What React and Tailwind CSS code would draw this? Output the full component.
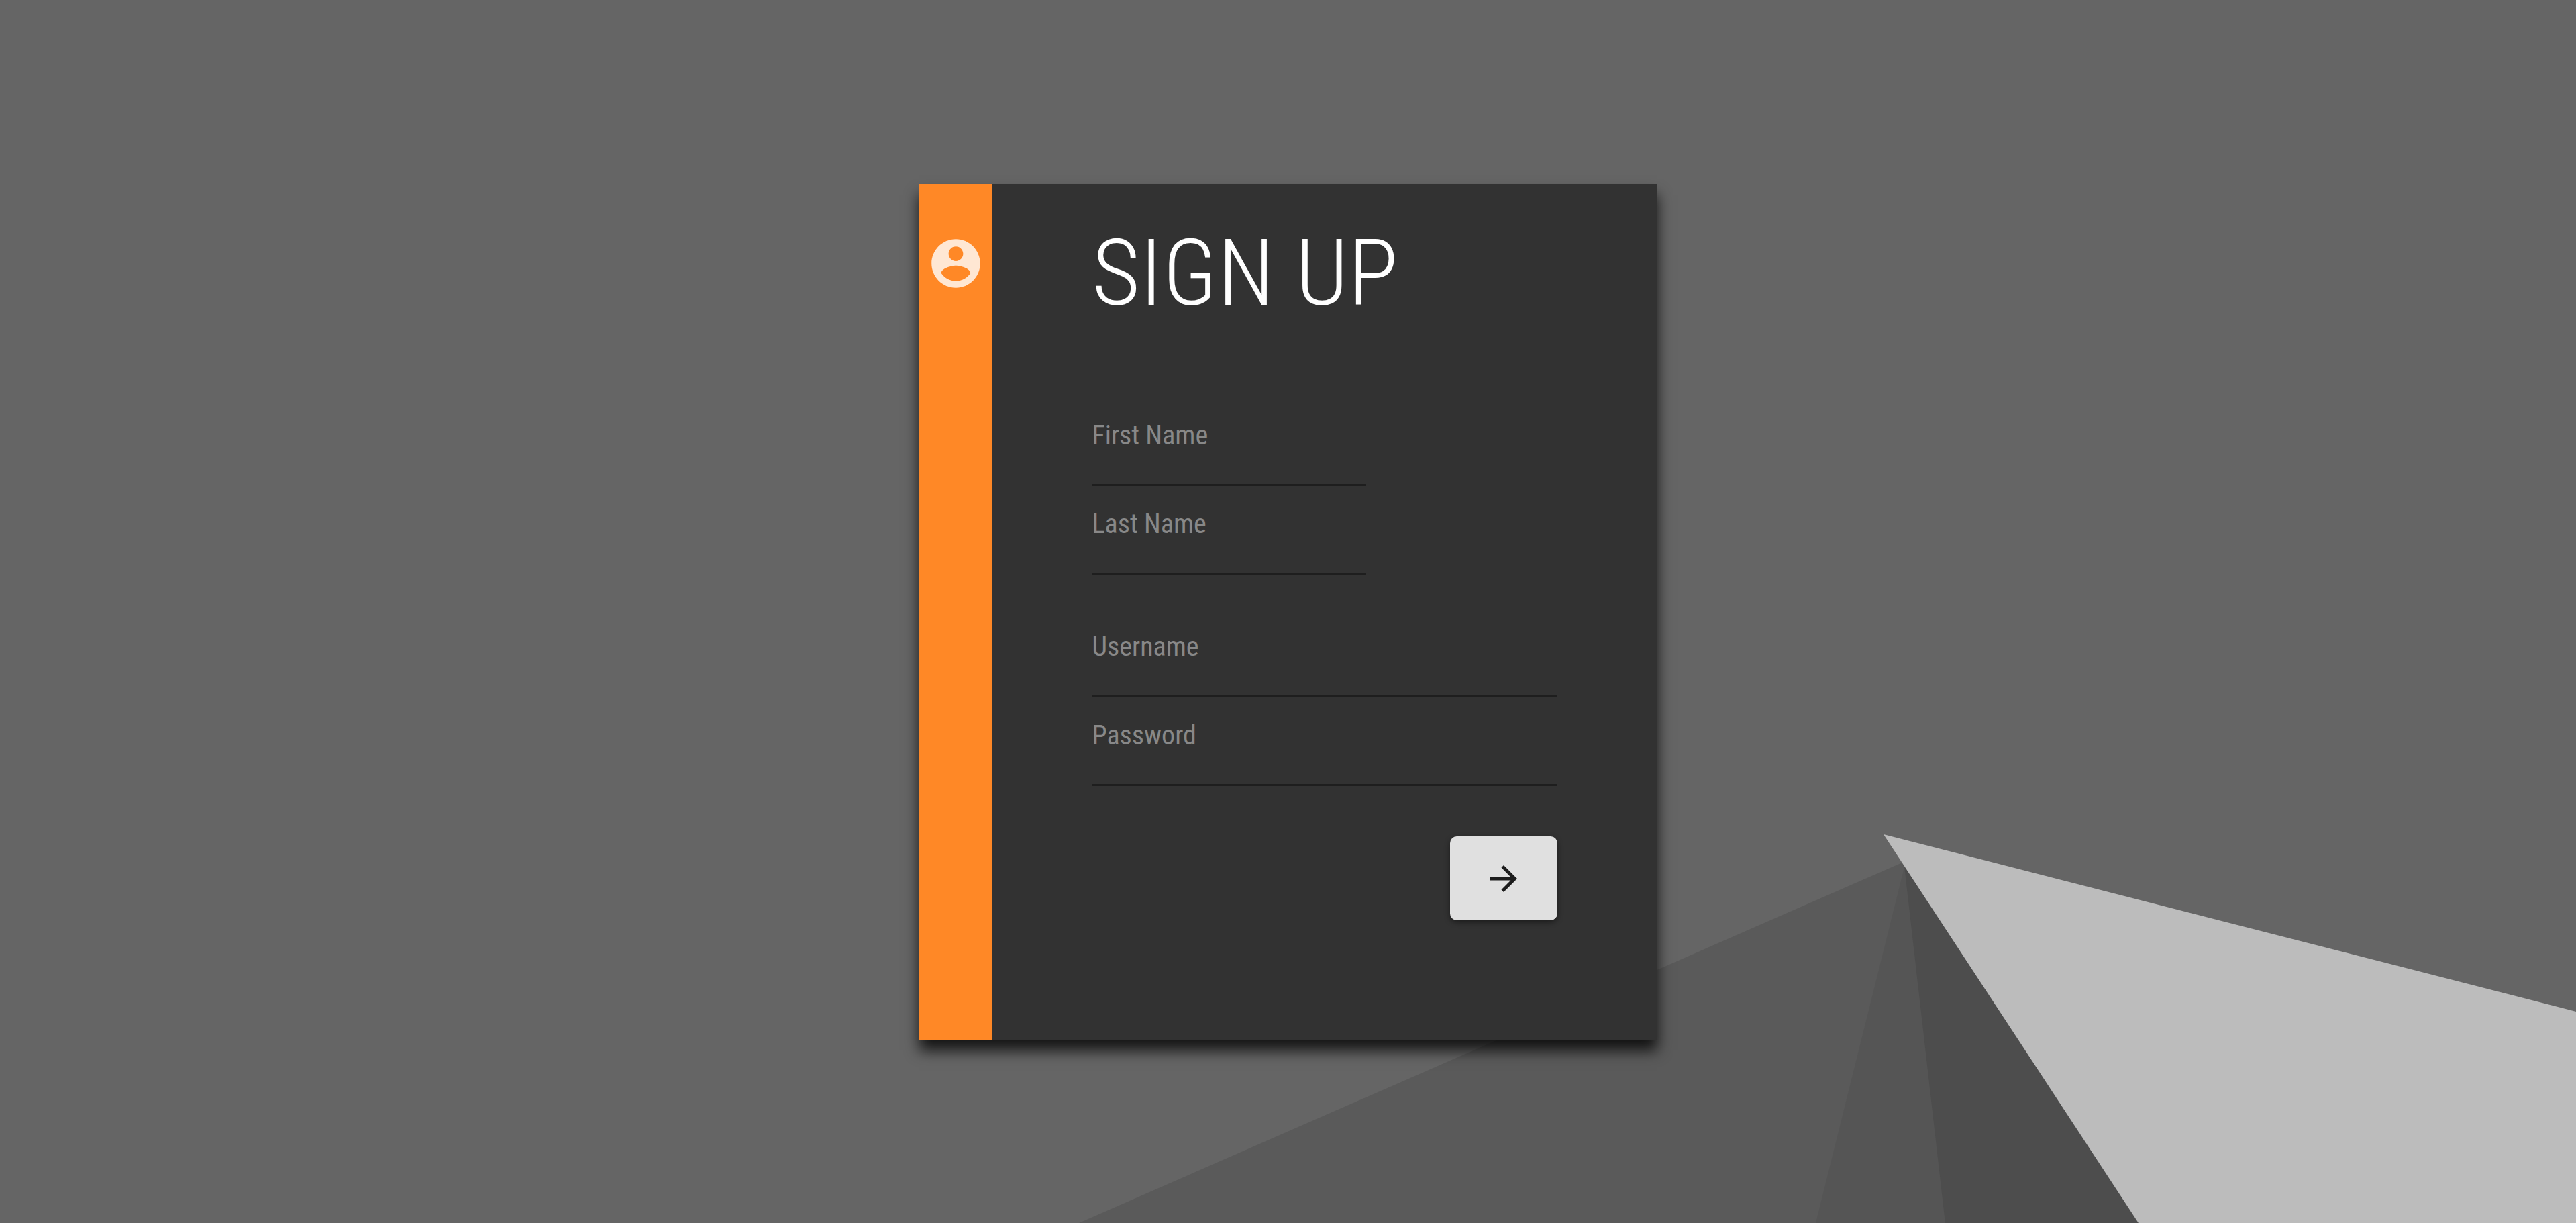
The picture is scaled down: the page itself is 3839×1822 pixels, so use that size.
const NAME_FIELDS = [
  { id: "firstName", label: "First Name", type: "text" },
  { id: "lastName", label: "Last Name", type: "text" },
];

const ACCOUNT_FIELDS = [
  { id: "username", label: "Username", type: "text" },
  { id: "password", label: "Password", type: "password" },
];

function Backdrop() {
  return (
    <svg
      className="absolute inset-0 h-full w-full"
      viewBox="0 0 3839 1822"
      preserveAspectRatio="xMaxYMax slice"
      aria-hidden="true"
    >
      <polygon points="1608,1822 2835,1285 2842,1296 2760,1822" fill="#5a5a5a" />
      <polygon points="2706,1822 2838,1292 2920,1822" fill="#555555" />
      <polygon points="2899,1822 2838,1290 3187,1822" fill="#4d4d4d" />
      <polygon points="2807,1243 3839,1507 3839,1822 3187,1822" fill="#bcbcbc" />
    </svg>
  );
}

function AccountIcon() {
  return (
    <svg className="size-[87px]" viewBox="0 0 24 24" fill="#ffe7d3" aria-hidden="true">
      <path d="M12 2C6.48 2 2 6.48 2 12s4.48 10 10 10 10-4.48 10-10S17.52 2 12 2zm0 3c1.66 0 3 1.34 3 3s-1.34 3-3 3-3-1.34-3-3 1.34-3 3-3zm0 14.2c-2.5 0-4.71-1.28-6-3.22.03-1.99 4-3.08 6-3.08 1.99 0 5.97 1.09 6 3.08-1.29 1.94-3.5 3.22-6 3.22z" />
    </svg>
  );
}

function ArrowIcon() {
  return (
    <svg className="size-[60px]" viewBox="0 0 24 24" fill="#1c1c1c" aria-hidden="true">
      <path d="M12 4l-1.41 1.41L16.17 11H4v2h12.17l-5.58 5.59L12 20l8-8z" />
    </svg>
  );
}

function Field({ id, label, type }) {
  return (
    <input
      id={id}
      name={id}
      type={type}
      aria-label={label}
      placeholder={label}
      className="block h-[132px] w-full border-b-[3px] border-[#1e1e1e] bg-transparent pt-8 pb-[49px] text-[40px] leading-[48px] text-white outline-none placeholder:text-[#888888] placeholder:opacity-100"
    />
  );
}

export default function App() {
  return (
    <div className="relative min-h-screen bg-[#656565] px-4 pt-[274px] pb-16 font-['Roboto_Condensed',Roboto,sans-serif]">
      <Backdrop />
      <main className="relative mx-auto flex w-full max-w-[1100px] bg-[#323232] shadow-[0_16px_20px_rgba(0,0,0,0.8)]">
        <aside className="flex w-[109px] shrink-0 justify-center bg-[#ff8826] pt-[75px]">
          <AccountIcon />
        </aside>
        <form
          className="min-w-0 grow px-[149px] pt-[63px] pb-[178px]"
          onSubmit={(event) => event.preventDefault()}
        >
          <h1 className="text-[138px] leading-[140px] font-light whitespace-nowrap text-white">SIGN UP</h1>
          <div className="mt-[115px] w-[59%]">
            {NAME_FIELDS.map((field) => (
              <Field key={field.id} {...field} />
            ))}
          </div>
          <div className="mt-[51px]">
            {ACCOUNT_FIELDS.map((field) => (
              <Field key={field.id} {...field} />
            ))}
          </div>
          <div className="mt-[75px] flex justify-end">
            <button
              type="submit"
              aria-label="Sign up"
              className="flex h-[125px] w-40 items-center justify-center rounded-[10px] bg-[#e0e0e0] shadow-[0_3px_8px_rgba(0,0,0,0.45)]"
            >
              <ArrowIcon />
            </button>
          </div>
        </form>
      </main>
    </div>
  );
}
